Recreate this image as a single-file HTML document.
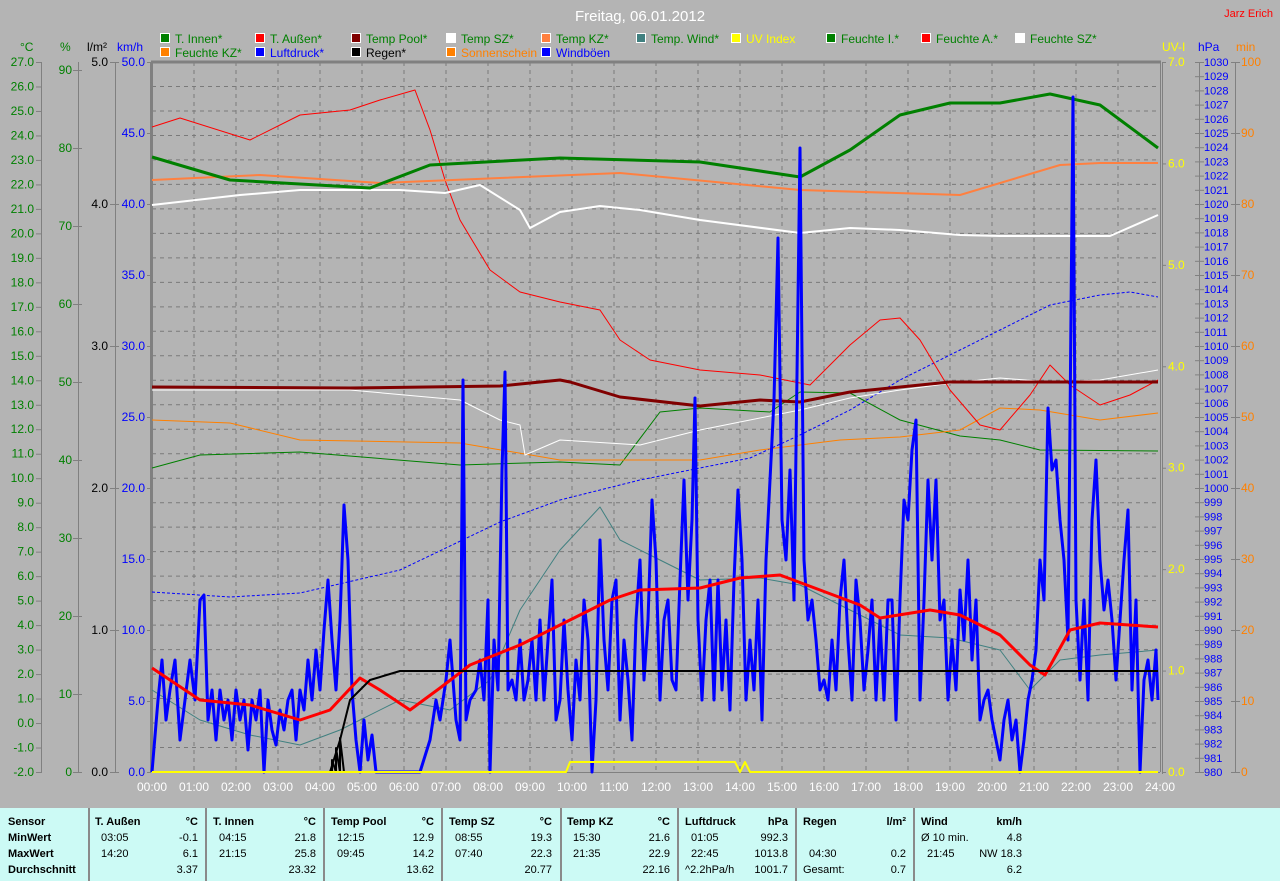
<!DOCTYPE html>
<html><head><meta charset="utf-8">
<style>
html,body{margin:0;padding:0;background:#b4b4b4;width:1280px;height:881px;overflow:hidden;font-family:"Liberation Sans",sans-serif}
svg text{font-family:"Liberation Sans",sans-serif}
#tbl{position:absolute;left:0;top:808px;width:1280px;height:73px;background:#ccfaf5;font-size:11px}
#tbl div{position:absolute;white-space:nowrap;line-height:13px}
.b{font-weight:bold}
.sep{position:absolute;top:0;width:2px;height:73px;background:#8a8a8a}
</style></head><body>
<svg id="s" width="1280" height="808" style="position:absolute;left:0;top:0" xmlns="http://www.w3.org/2000/svg">
<text x="640" y="21" font-size="15" fill="#ffffff" text-anchor="middle">Freitag, 06.01.2012</text>
<text x="1273" y="17" font-size="11" fill="#ff0000" text-anchor="end">Jarz Erich</text>
<g id="grid"></g>
<g id="axes"></g>
<g id="leg"></g>
<g id="lines" fill="none"></g>
</svg>
<div id="tbl">
<div class="sep" style="left:88px"></div><div class="sep" style="left:205px"></div><div class="sep" style="left:323px"></div><div class="sep" style="left:441px"></div><div class="sep" style="left:560px"></div><div class="sep" style="left:677px"></div><div class="sep" style="left:795px"></div><div class="sep" style="left:913px"></div>
<div class="b" style="left:8px;top:8px">Sensor</div><div class="b" style="left:8px;top:24px">MinWert</div><div class="b" style="left:8px;top:40px">MaxWert</div><div class="b" style="left:8px;top:56px">Durchschnitt</div>
</div>
<script>
var NS="http://www.w3.org/2000/svg";
function el(p,t,a,txt){var e=document.createElementNS(NS,t);for(var k in a)e.setAttribute(k,a[k]);if(txt!==undefined)e.textContent=txt;document.getElementById(p).appendChild(e);return e;}
var L=152,R=1160,T=62,B=772;
for(var h=1;h<24;h++){var x=L+h*42;el('grid','line',{x1:x,y1:T,x2:x,y2:B,stroke:'#7a7a7a','stroke-dasharray':'4,4','stroke-width':1});}
for(var i=1;i<29;i++){var y=T+i*710/29;el('grid','line',{x1:L,y1:y,x2:R,y2:y,stroke:'#7a7a7a','stroke-dasharray':'4,4','stroke-width':1});}
el('grid','line',{x1:151,y1:T,x2:R+1,y2:T,stroke:'#808080','stroke-width':3});
el('grid','line',{x1:151.5,y1:T,x2:151.5,y2:B,stroke:'#808080','stroke-width':3});
el('grid','line',{x1:1160.5,y1:T,x2:1160.5,y2:B,stroke:'#808080','stroke-width':1});
el('grid','line',{x1:1162.5,y1:T,x2:1162.5,y2:B+2,stroke:'#808080','stroke-width':1});
el('grid','line',{x1:L,y1:B+.5,x2:R,y2:B+.5,stroke:'#808080','stroke-width':1});
function axis(xl,tx,xr,lab,n,fn,col,anchor){ el('axes','line',{x1:xl,y1:T,x2:xl,y2:B,stroke:'#808080'});
 for(var i=0;i<n;i++){var o=fn(i);el('axes','line',{x1:tx,y1:o.y+.5,x2:xr,y2:o.y+.5,stroke:'#808080'});el('axes','text',{x:lab,y:o.y+4,'font-size':12,fill:col,'text-anchor':anchor},o.t);}}
axis(41.5,36,42,34,30,function(i){return{y:T+i*710/29,t:(27-i).toFixed(1)}},'#008000','end');
axis(78.5,73,82,72,10,function(i){return{y:B-i*78,t:String(i*10)}},'#008000','end');
axis(115.5,110,119,108,6,function(i){return{y:B-i*142,t:i.toFixed(1)}},'#000000','end');
for(var i=0;i<11;i++){var y=B-i*71;el('axes','line',{x1:147,y1:y+.5,x2:151,y2:y+.5,stroke:'#808080'});el('axes','text',{x:145,y:y+4,'font-size':12,fill:'#0000ff','text-anchor':'end'},(i*5).toFixed(1));}
for(var i=0;i<8;i++){var y=B-i*710/7;el('axes','line',{x1:1162,y1:y+.5,x2:1166,y2:y+.5,stroke:'#808080'});el('axes','text',{x:1168,y:y+4,'font-size':12,fill:'#ffff00'},i.toFixed(1));}
el('axes','line',{x1:1199.5,y1:T,x2:1199.5,y2:B,stroke:'#808080'});
for(var i=0;i<51;i++){var y=B-i*14.2;el('axes','line',{x1:1195,y1:y+.5,x2:1204,y2:y+.5,stroke:'#808080'});el('axes','text',{x:1204,y:y+4,'font-size':11,fill:'#0000ff'},String(980+i));}
el('axes','line',{x1:1235.5,y1:T,x2:1235.5,y2:B,stroke:'#808080'});
for(var i=0;i<11;i++){var y=B-i*71;el('axes','line',{x1:1231,y1:y+.5,x2:1240,y2:y+.5,stroke:'#808080'});el('axes','text',{x:1241,y:y+4,'font-size':12,fill:'#ff8000'},String(i*10));}
[['°C',20,'#008000'],['%',60,'#008000'],['l/m²',87,'#000'],['km/h',117,'#0000ff'],['UV-I',1162,'#ffff00'],['hPa',1198,'#0000ff'],['min',1236,'#ff8000']].forEach(function(a){el('axes','text',{x:a[1],y:51,'font-size':12,fill:a[2]},a[0]);});
for(var h=0;h<=24;h++){el('axes','text',{x:L+h*42,y:791,'font-size':12,fill:'#fff','text-anchor':'middle'},(h<10?'0':'')+h+':00');}
var lg=[[165,38,'#008000','T. Innen*','#008000'],[260,38,'#ff0000','T. Außen*','#008000'],[356,38,'#800000','Temp Pool*','#008000'],[451,38,'#ffffff','Temp SZ*','#008000'],[546,38,'#ff8040','Temp KZ*','#008000'],[641,38,'#408080','Temp. Wind*','#008000'],[736,38,'#ffff00','UV Index','#ffff00'],[831,38,'#008000','Feuchte I.*','#008000'],[926,38,'#ff0000','Feuchte A.*','#008000'],[1020,38,'#ffffff','Feuchte SZ*','#008000'],
[165,52,'#ff8000','Feuchte KZ*','#008000'],[260,52,'#0000ff','Luftdruck*','#0000ff'],[356,52,'#000000','Regen*','#000000'],[451,52,'#ff8000','Sonnenschein','#ff8000'],[546,52,'#0000ff','Windböen','#0000ff']];
lg.forEach(function(a){el('leg','rect',{x:a[0]-4.5,y:a[1]-4.5,width:9,height:9,fill:a[2],stroke:'#fff'});el('leg','text',{x:a[0]+10,y:a[1]+5,'font-size':12,fill:a[4]},a[3]);});
function pl(pts,col,w,extra){var a={points:pts,stroke:col,'stroke-width':w,'stroke-linejoin':'round'};for(var k in extra)a[k]=extra[k];el('lines','polyline',a);}
pl("152,592 230,597 300,593 400,570 500,522 560,500 640,480 700,468 750,458 800,435 850,410 900,380 960,350 1000,330 1050,305 1100,295 1130,292 1158,297",'#0000ff',1,{'stroke-dasharray':'3,2'});
pl("152,468 200,455 300,452 460,465 560,462 620,465 660,412 700,408 770,412 800,392 850,393 900,420 960,436 1000,440 1040,450 1158,451",'#008000',1);
pl("152,420 230,423 300,440 460,443 560,460 700,460 760,450 840,440 900,437 960,430 1000,408 1040,410 1100,420 1158,413",'#ff8000',1);
pl("152,390 350,390 460,400 500,420 520,425 525,455 560,440 640,445 700,430 750,420 800,410 850,398 900,390 960,382 1000,378 1050,382 1100,380 1158,370",'#ffffff',1);
pl("152,127 180,118 250,140 300,115 350,110 380,100 415,90 430,130 445,180 460,220 490,270 520,292 560,302 600,310 620,340 650,360 700,370 760,375 810,385 850,345 880,320 900,318 920,340 950,390 980,425 1000,430 1030,395 1050,365 1070,385 1100,405 1130,395 1158,380",'#ff0000',1);
pl("152,180 260,175 380,183 620,173 800,190 960,195 1060,165 1100,163 1158,163",'#ff8040',2);
pl("152,205 240,195 300,190 400,190 445,193 480,185 520,210 530,228 560,212 600,206 640,210 700,220 800,233 850,228 900,230 960,235 1000,236 1050,236 1110,236 1158,215",'#ffffff',2);
pl("152,157 230,180 370,188 430,165 560,158 700,162 800,177 850,150 900,115 950,103 1000,103 1050,94 1100,105 1158,148",'#008000',3);
pl("152,387 350,388 500,386 560,380 570,382 620,397 700,406 760,400 800,402 850,392 950,382 1158,382",'#800000',3);
pl("152,690 200,720 250,735 300,745 340,730 400,700 450,710 490,680 520,610 560,550 600,507 620,540 660,560 700,580 760,578 800,585 860,615 900,635 950,638 1000,650 1030,690 1060,660 1100,655 1158,650",'#408080',1);
pl("152,772 158,700 162,660 166,720 170,690 175,660 180,740 185,700 190,660 195,700 200,600 204,595 208,720 212,690 216,740 220,690 224,720 228,700 232,740 236,690 240,720 244,700 248,750 252,700 256,720 260,690 264,772 268,700 272,730 276,745 280,710 284,730 288,700 292,690 296,740 300,690 304,710 308,660 312,700 316,650 320,690 324,630 328,580 332,640 336,690 340,620 344,505 348,560 352,690 356,740 360,772 364,720 368,760 372,735 376,772 380,772 420,772 430,740 436,700 440,720 446,680 450,640 456,720 460,740 463,380 466,720 470,700 476,690 480,660 484,700 488,600 490,772 494,640 498,690 502,470 505,372 508,690 512,680 516,700 520,640 524,700 528,680 532,640 536,700 540,620 544,700 548,640 552,580 556,720 560,700 564,620 568,690 572,740 576,660 580,700 584,600 588,640 592,772 596,700 600,540 604,640 608,690 612,600 616,580 620,720 624,640 628,680 632,740 636,620 640,560 644,680 648,620 652,500 656,560 660,700 664,620 668,600 672,680 676,690 680,580 684,480 688,600 692,520 695,398 698,620 702,700 706,620 710,580 714,700 718,580 722,690 726,620 730,710 734,580 738,490 742,560 746,700 750,640 754,690 758,600 762,720 766,560 770,480 774,400 778,238 782,520 786,560 790,470 794,600 796,450 800,148 804,560 808,620 812,600 816,640 820,690 824,680 828,700 832,640 836,690 840,600 844,560 848,640 852,700 856,580 860,620 864,690 868,650 872,600 876,700 880,620 884,700 888,600 892,600 896,720 900,600 904,500 908,520 912,450 916,420 920,700 924,600 928,480 932,560 936,480 940,620 944,600 948,700 952,640 956,690 960,590 964,640 968,560 972,660 976,600 980,720 984,700 988,690 992,720 996,740 1000,760 1004,720 1008,700 1012,740 1016,720 1020,772 1024,740 1028,700 1032,680 1036,650 1040,560 1044,600 1048,408 1052,470 1056,460 1060,520 1064,560 1068,640 1073,97 1076,600 1080,680 1084,600 1088,700 1092,520 1096,460 1100,560 1104,610 1108,580 1112,620 1116,680 1120,620 1124,560 1128,510 1132,690 1136,600 1140,772 1144,680 1148,660 1152,700 1156,650 1158,700",'#0000ff',3);
pl("152,668 200,700 250,705 300,720 330,710 360,678 380,690 410,710 440,688 470,665 520,645 560,625 610,600 640,590 700,588 740,578 780,575 820,590 860,605 880,618 930,610 960,615 1000,635 1030,665 1045,675 1070,630 1100,623 1158,627",'#ff0000',3);
pl("152,772 330,772 340,740 350,700 370,680 400,671 1158,671",'#000000',2);
pl("332,772 332,760 336,772 336,748 340,772 340,738 344,772",'#000000',2);
pl("152,772 566,772 570,762 735,762 740,772 745,762 750,772 1158,772",'#ffff00',2);
var tb=document.getElementById('tbl');
function tx(x,y,t,b,right){var d=document.createElement('div');d.textContent=t;if(b)d.className='b';if(right){d.style.right=(1280-x)+'px';}else d.style.left=x+'px';d.style.top=y+'px';tb.appendChild(d);}
var cols=[[95,198,'T. Außen','°C',['03:05','-0.1'],['14:20','6.1'],['','3.37']],[213,316,'T. Innen','°C',['04:15','21.8'],['21:15','25.8'],['','23.32']],[331,434,'Temp Pool','°C',['12:15','12.9'],['09:45','14.2'],['','13.62']],[449,552,'Temp SZ','°C',['08:55','19.3'],['07:40','22.3'],['','20.77']],[567,670,'Temp KZ','°C',['15:30','21.6'],['21:35','22.9'],['','22.16']],[685,788,'Luftdruck','hPa',['01:05','992.3'],['22:45','1013.8'],['^2.2hPa/h','1001.7']],[803,906,'Regen','l/m²',['',''],['04:30','0.2'],['Gesamt:','0.7']],[921,1022,'Wind','km/h',['Ø 10 min.','4.8'],['21:45','NW 18.3'],['','6.2']]];
cols.forEach(function(c){tx(c[0],8,c[2],1);tx(c[1],8,c[3],1,1);for(var r=0;r<3;r++){var p=c[4+r];var ind=(p[0].length<=5&&p[0].indexOf(':')>0)?6:0;tx(c[0]+ind,24+r*16,p[0]);tx(c[1],24+r*16,p[1],0,1);}});
</script>
</body></html>
